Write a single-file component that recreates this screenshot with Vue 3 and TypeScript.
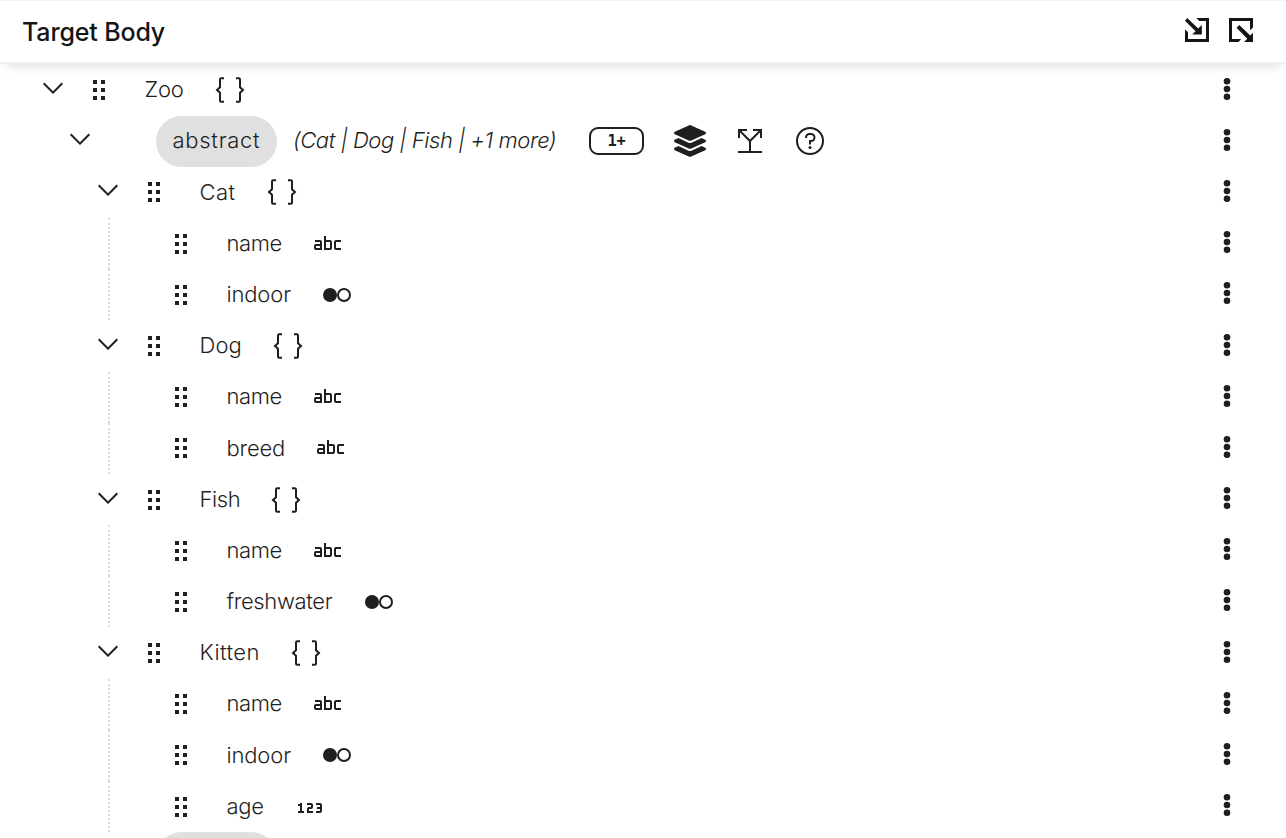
<script setup lang="ts">
type Kind = 'object' | 'string' | 'boolean' | 'integer' | 'abstract'

interface Field {
  name: string
  level: number
  kind: Kind
  width: number
  spacing: number
}

const field = (name: string, level: number, kind: Kind, width: number, spacing = 0): Field => ({
  name,
  level,
  kind,
  width,
  spacing,
})

const fields: Field[] = [
  field('Zoo', 0, 'object', 39, -0.2),
  field('abstract', 1, 'abstract', 88, 0.72),
  field('Cat', 2, 'object', 36, 0.5),
  field('name', 3, 'string', 55, -0.4),
  field('indoor', 3, 'boolean', 64, -0.15),
  field('Dog', 2, 'object', 42, 0.1),
  field('name', 3, 'string', 55, -0.4),
  field('breed', 3, 'string', 58, -0.2),
  field('Fish', 2, 'object', 40, -0.4),
  field('name', 3, 'string', 55, -0.4),
  field('freshwater', 3, 'boolean', 106, -0.35),
  field('Kitten', 2, 'object', 60, 0.4),
  field('name', 3, 'string', 55, -0.4),
  field('indoor', 3, 'boolean', 64, -0.15),
  field('age', 3, 'integer', 37, -0.3),
  field('abstract', 1, 'abstract', 88, 0.72),
]
</script>

<template>
  <main class="panel">
    <header class="header">
      <h1 class="title">Target Body</h1>
      <div class="actions">
        <svg class="action" viewBox="0 0 24 24">
          <path d="M11.3 0H24V24H0V11.3L3 14.3V21H21V3H14.3Z" />
          <path d="M2.2 0L13.2 10.4L16.8 7V16.6H7.2L10.6 13.2L0 2.8Z" />
        </svg>
        <svg class="action" viewBox="0 0 24 24">
          <path d="M0 0H24V9.5L21 12.2V3H3V21H12.2L9.5 24H0Z" />
          <path d="M10.3 7L21.3 17.4L24 14.8V24H15L18.3 20.7L7.5 9.8Z" />
        </svg>
      </div>
    </header>

    <section class="tree">
      <div v-for="(f, i) in fields" :key="i" class="row">
        <div class="lead" :class="'level-' + f.level">
          <svg v-if="f.level < 3" class="icon chevron" viewBox="0 0 32 32">
            <path d="M16 22L6 12L7.4 10.6L16 19.2L24.6 10.6L26 12Z" />
          </svg>
          <svg v-if="f.kind !== 'abstract'" class="icon drag" viewBox="0 0 32 32">
            <path d="M10 6h4v4h-4zM18 6h4v4h-4zM10 14h4v4h-4zM18 14h4v4h-4zM10 22h4v4h-4zM18 22h4v4h-4z" />
          </svg>
        </div>
        <div class="label" :class="{ pill: f.kind === 'abstract' }">
          <span class="name" :style="{ width: f.width + 'px', letterSpacing: f.spacing + 'px' }">{{ f.name }}</span>
        </div>

        <svg v-if="f.kind === 'object'" class="icon type" viewBox="0 0 32 32">
          <path class="line" d="M10 4.3H7.2Q6 4.3 6 5.5V13.2L3 16L6 18.8V26.5Q6 27.7 7.2 27.7H10M22 4.3H24.8Q26 4.3 26 5.5V13.2L29 16L26 18.8V26.5Q26 27.7 24.8 27.7H22" />
        </svg>
        <svg v-else-if="f.kind === 'string'" class="icon type" viewBox="0 0 32 32">
          <path d="M29 22H24a2 2 0 0 1-2-2V14a2 2 0 0 1 2-2h5v2H24v6h5Z" />
          <path d="M18 12H14V8H12V22h6a2 2 0 0 0 2-2V14A2 2 0 0 0 18 12Zm-4 8V14h4v6Z" />
          <path d="M8 12H3v2H8v2H4a2 2 0 0 0-2 2v2a2 2 0 0 0 2 2h6V14A2 2 0 0 0 8 12Zm0 8H4V18H8Z" />
        </svg>
        <svg v-else-if="f.kind === 'boolean'" class="icon type" viewBox="0 0 32 32">
          <circle cx="9" cy="16" r="7" />
          <circle class="line" cx="23" cy="16" r="6" />
        </svg>
        <svg v-else-if="f.kind === 'integer'" class="icon type" viewBox="0 0 32 32">
          <path d="M26 12H22v2h4v2H23v2h3v2H22v2h4a2 2 0 0 0 2-2V14A2 2 0 0 0 26 12Z" />
          <path d="M19 22H13V18a2 2 0 0 1 2-2h2V14H13V12h4a2 2 0 0 1 2 2v2a2 2 0 0 1-2 2H15v2h4Z" />
          <path d="M8 20V12H6v1H4v2H6v5H4v2h6V20Z" />
        </svg>
        <template v-else-if="i < fields.length - 1">
          <em class="members">(Cat | Dog | Fish | +1 more)</em>
          <span class="badge">1+</span>
          <div class="markers">
            <svg class="icon" viewBox="0 0 512 512">
              <path d="M12.41 148.02l232.94 105.67c6.8 3.09 14.49 3.09 21.29 0l232.94-105.67c16.55-7.51 16.55-32.52 0-40.03L266.65 2.31a25.607 25.607 0 0 0-21.29 0L12.41 107.98c-16.55 7.51-16.55 32.53 0 40.04zm487.18 88.28l-58.09-26.33-161.64 73.27c-7.56 3.43-15.59 5.17-23.86 5.17s-16.29-1.74-23.86-5.17L70.51 209.97l-58.1 26.33c-16.55 7.5-16.55 32.5 0 40l232.94 105.59c6.8 3.08 14.49 3.08 21.29 0L499.59 276.3c16.55-7.5 16.55-32.5 0-40zm0 127.8l-57.87-26.23-161.86 73.37c-7.56 3.43-15.59 5.17-23.86 5.17s-16.29-1.74-23.86-5.17L70.29 337.87 12.41 364.1c-16.55 7.5-16.55 32.5 0 40l232.94 105.59c6.8 3.08 14.49 3.08 21.29 0L499.59 404.1c16.55-7.5 16.55-32.5 0-40z" />
            </svg>
            <svg class="icon" viewBox="0 0 32 32">
              <path class="line" d="M5 13V5H13M19 5H27V13M5 5L16 16L27 5M16 16V27M4 27H28" />
            </svg>
            <svg class="icon" viewBox="0 0 32 32">
              <circle class="line" cx="16" cy="16" r="13" />
              <path d="M17 8H15.5A4.49 4.49 0 0 0 11 12.5V13h2v-.5A2.5 2.5 0 0 1 15.5 10H17a2.5 2.5 0 0 1 0 5H15v4.5h2V17a4.5 4.5 0 0 0 0-9Z" />
              <circle cx="16" cy="22.5" r="1.5" />
            </svg>
          </div>
        </template>

        <svg class="kebab" viewBox="0 0 8 24">
          <circle cx="4" cy="4.3" r="3.3" />
          <circle cx="4" cy="12" r="3.3" />
          <circle cx="4" cy="19.7" r="3.3" />
        </svg>
      </div>
    </section>
  </main>
</template>

<style>
body {
  background: #fff;
}
</style>

<style scoped>
.panel {
  display: flex;
  flex-direction: column;
  width: 1286px;
  height: 838px;
  overflow: hidden;
  color: #1f1f1f;
  font-family: Inter, 'Liberation Sans', sans-serif;
}
.header {
  box-sizing: border-box;
  display: flex;
  flex: none;
  align-items: center;
  justify-content: space-between;
  height: 64px;
  padding: 0 33px 3px 22px;
  border-top: 1px solid #f2f2f2;
  border-bottom: 2px solid #f0f0f0;
  box-shadow: 0 8px 10px -6px rgba(0, 0, 0, 0.14);
}
.title {
  margin: 0;
  padding-top: 4px;
  color: #151515;
  font-size: 25px;
  font-weight: 500;
  letter-spacing: -0.15px;
  line-height: 32px;
  white-space: nowrap;
}
.actions {
  display: flex;
  gap: 20px;
}
.action {
  width: 24px;
  height: 24px;
  fill: #151515;
}
.tree {
  flex: none;
  padding-top: 0.42px;
}
.row {
  display: flex;
  align-items: center;
  height: 51.1875px;
}
.icon {
  flex: none;
  width: 32px;
  height: 32px;
  fill: #1f1f1f;
}
.line {
  fill: none;
  stroke: #1f1f1f;
  stroke-width: 2;
}
.lead {
  box-sizing: border-box;
  display: flex;
  flex: none;
  align-items: center;
  gap: 14px;
  height: 100%;
}
.level-0 {
  width: 145px;
  padding-left: 37px;
}
.level-1 {
  width: 156px;
  padding-left: 64px;
}
.level-2 {
  width: 200px;
  padding-left: 92px;
}
.level-3 {
  width: 119px;
  margin-left: 108px;
  padding-left: 55px;
  border-left: 2px dotted #dcdcdc;
}
.chevron {
  margin-top: -4px;
}
.label {
  display: flex;
  flex: none;
  align-items: center;
  height: 100%;
}
.name {
  margin-top: -1.6px;
  font-size: 22px;
  font-weight: 300;
  line-height: 32px;
  text-indent: -0.5px;
  white-space: nowrap;
}
.pill {
  padding: 0 16px 0 17px;
  border-radius: 26px;
  background: #e0e0e0;
}
.type {
  margin-left: 30px;
}
.members {
  width: 263px;
  margin-top: -2px;
  margin-left: 17px;
  font-size: 22px;
  font-weight: 300;
  letter-spacing: -0.41px;
  text-indent: -1px;
  white-space: nowrap;
}
.badge {
  box-sizing: border-box;
  width: 55px;
  height: 28px;
  margin-left: 32px;
  border: 2px solid #1f1f1f;
  border-radius: 9px;
  font-family: 'DejaVu Sans Mono', monospace;
  font-size: 15.5px;
  font-weight: 700;
  letter-spacing: -0.3px;
  line-height: 25px;
  text-align: center;
}
.markers {
  display: flex;
  gap: 28px;
  margin-left: 30px;
}
.kebab {
  width: 8px;
  height: 24px;
  margin: -2.8px 55px 0 auto;
  fill: #1f1f1f;
}
</style>
